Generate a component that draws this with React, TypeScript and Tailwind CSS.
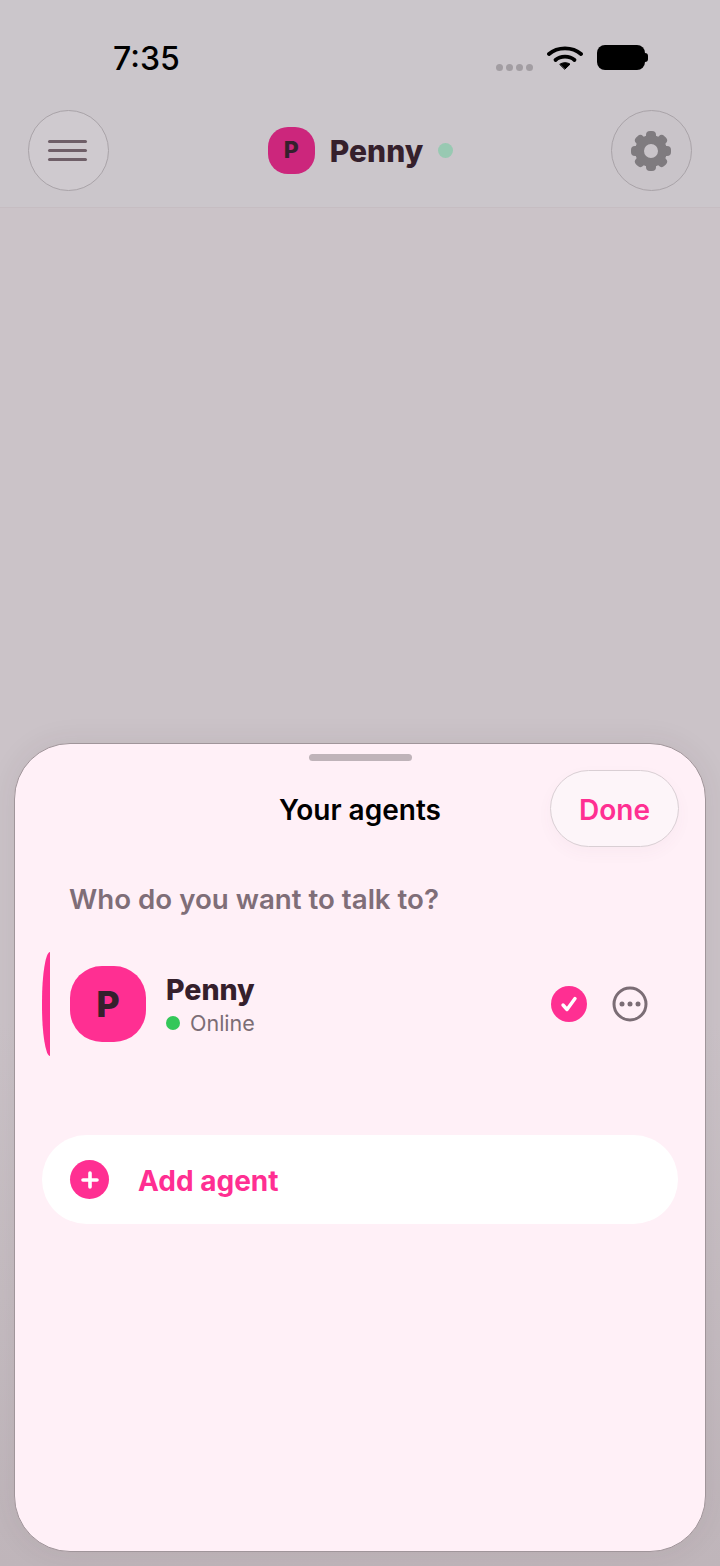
function Wifi() {
  return (
    <svg width="36" height="26" viewBox="0 0 36 26" fill="none" stroke="#000" strokeLinecap="round">
      <path d="M2 10 C10.5 2.5 25.5 2.5 34 10" strokeWidth="3.8" />
      <path d="M8.5 16 C13.5 11.5 22.5 11.5 27.5 16" strokeWidth="3.8" />
      <path d="M13 20.2 C15.5 18.2 20.5 18.2 23 20.2 L18 25 Z" fill="#000" stroke="#000" strokeWidth="1" strokeLinejoin="round" />
    </svg>
  );
}

function Gear() {
  const teeth = [0, 45, 90, 135, 180, 225, 270, 315];
  return (
    <svg width="42" height="42" viewBox="0 0 42 42">
      {teeth.map((a) => (
        <rect key={a} x="16" y="1" width="10" height="12" rx="4" fill="#7f7b7f" transform={`rotate(${a} 21 21)`} />
      ))}
      <circle cx="21" cy="21" r="11.5" fill="none" stroke="#7f7b7f" strokeWidth="9" />
    </svg>
  );
}

function Avatar({ size, radius, bg, text, label }: { size: string; radius: string; bg: string; text: string; label: string }) {
  return (
    <div className={`flex items-center justify-center text-[#35202c] font-extrabold ${size} ${radius} ${bg} ${text}`}>
      {label}
    </div>
  );
}

export default function App() {
  return (
    <div className="flex h-[1566px] w-[720px] flex-col overflow-hidden bg-[#ccc4c9] font-['Inter',sans-serif]">
      <header className="h-[208px] shrink-0 border-b border-[#c6bdc2] bg-[#cbc6cb]">
        <div className="flex h-[110px] items-start pl-[113px] pr-[72px] pt-[39px]">
          <span className="text-[32px] font-medium leading-[40px] text-black">7:35</span>
          <div className="ml-auto flex items-start">
            <div className="mr-[14px] mt-[25px] flex gap-[3px]">
              <span className="h-[7px] w-[7px] rounded-full bg-[#a29da2]" />
              <span className="h-[7px] w-[7px] rounded-full bg-[#a29da2]" />
              <span className="h-[7px] w-[7px] rounded-full bg-[#a29da2]" />
              <span className="h-[7px] w-[7px] rounded-full bg-[#a29da2]" />
            </div>
            <div className="mr-[14px] mt-[5px]">
              <Wifi />
            </div>
            <div className="mt-[6px] flex items-center">
              <div className="h-[25px] w-[48px] rounded-[8px] bg-black" />
              <div className="h-[9px] w-[3px] rounded-r-full bg-black" />
            </div>
          </div>
        </div>
        <div className="flex h-[81px] items-center justify-between px-[28px]">
          <button className="flex h-[81px] w-[81px] flex-col items-center justify-center gap-[6px] rounded-full border border-[#a9a3a8] bg-[#cfcacf] pr-[2px]">
            <span className="h-[3px] w-[39px] rounded-full bg-[#6f5f68]" />
            <span className="h-[3px] w-[39px] rounded-full bg-[#6f5f68]" />
            <span className="h-[3px] w-[39px] rounded-full bg-[#6f5f68]" />
          </button>
          <div className="flex items-center">
            <Avatar size="ml-[1px] h-[47px] w-[47px]" radius="rounded-[20px]" bg="bg-[#cc267c]" text="text-[23px]" label="P" />
            <span className="ml-[15px] text-[30px] font-extrabold leading-[40px] text-[#35202c]">Penny</span>
            <span className="ml-[15px] h-[15px] w-[15px] rounded-full bg-[#98c9b2]" />
          </div>
          <button className="flex h-[81px] w-[81px] items-center justify-center rounded-full border border-[#a9a3a8] bg-[#c9c4c9]">
            <Gear />
          </button>
        </div>
      </header>
      <main className="flex flex-1 flex-col justify-end bg-[linear-gradient(to_bottom,#cbc3c8_60%,#bfb5ba_100%)] px-[14px] pb-[14px]">
        <section className="flex h-[809px] flex-col rounded-[56px] border border-[#a0959a] bg-[#fff0f7] shadow-[0_0_30px_rgba(60,40,50,0.08)]">
          <div className="mx-auto mt-[10px] h-[7px] w-[103px] rounded-full bg-[#bfb3b9]" />
          <div className="relative mt-[9px] flex h-[77px] items-center justify-center pt-[2px]">
            <h1 className="text-[28px] font-semibold leading-[36px] text-black">Your agents</h1>
            <button className="absolute right-[26px] top-0 h-[77px] w-[129px] rounded-full border border-[#d9cfd4] bg-[#fdf5f9] pt-[2px] text-[28px] font-semibold text-[#ff2f92] shadow-[0_6px_16px_rgba(120,80,100,0.04)]">
              Done
            </button>
          </div>
          <p className="ml-[54px] mt-[34px] mb-[1px] text-[27.7px] font-semibold leading-[36px] text-[#7f6e78]">Who do you want to talk to?</p>
          <div className="ml-[27px] mr-[57px] mt-[34px] flex h-[104px] items-center">
            <div className="h-[104px] w-[8px] rounded-l-[8px_50px] bg-[#ff2f92]" />
            <div className="ml-[20px]">
              <Avatar size="h-[76px] w-[76px]" radius="rounded-[32px]" bg="bg-[#ff2f92]" text="text-[36px]" label="P" />
            </div>
            <div className="ml-[20px] flex flex-col">
              <span className="pt-[1px] text-[28.5px] font-extrabold leading-[36px] text-[#35202c]">Penny</span>
              <div className="mt-[1px] flex items-center">
                <span className="h-[14px] w-[14px] rounded-full bg-[#34c759]" />
                <span className="ml-[10px] text-[21.5px] leading-[28px] text-[#7b6d75]">Online</span>
              </div>
            </div>
            <div className="ml-auto flex items-center">
              <div className="flex h-[36px] w-[36px] items-center justify-center rounded-full bg-[#ff2f92]">
                <svg width="20" height="20" viewBox="0 0 20 20" fill="none" stroke="#fff" strokeWidth="3.4" strokeLinecap="round" strokeLinejoin="round">
                  <path d="M4 11 L8 15.5 L16 4.5" />
                </svg>
              </div>
              <svg className="ml-[25px]" width="36" height="36" viewBox="0 0 36 36">
                <circle cx="18" cy="18" r="16" fill="none" stroke="#7b6d75" strokeWidth="3" />
                <circle cx="10" cy="18" r="2.5" fill="#7b6d75" />
                <circle cx="18" cy="18" r="2.5" fill="#7b6d75" />
                <circle cx="26" cy="18" r="2.5" fill="#7b6d75" />
              </svg>
            </div>
          </div>
          <button className="ml-[27px] mr-[27px] mt-[79px] flex h-[89px] items-center rounded-full bg-white pl-[28px]">
            <span className="flex h-[39px] w-[39px] items-center justify-center rounded-full bg-[#ff2f92]">
              <svg width="20" height="20" viewBox="0 0 20 20" fill="none" stroke="#fff" strokeWidth="3.6" strokeLinecap="round">
                <path d="M10 3 V17 M3 10 H17" />
              </svg>
            </span>
            <span className="ml-[29px] pt-[2px] text-[28px] font-bold text-[#ff2f92]">Add agent</span>
          </button>
        </section>
      </main>
    </div>
  );
}
